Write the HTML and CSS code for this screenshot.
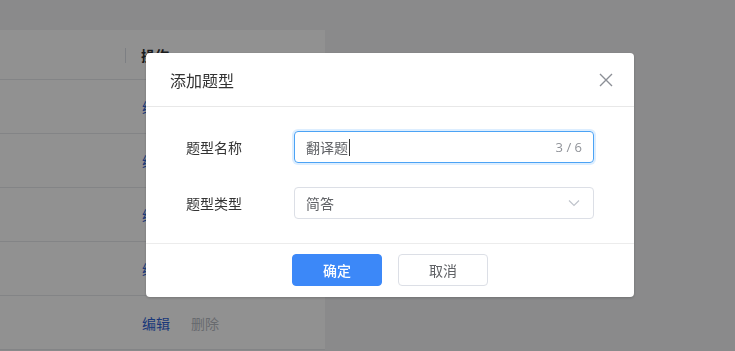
FILE: index.html
```html
<!DOCTYPE html>
<html lang="zh">
<head>
<meta charset="utf-8">
<title>添加题型</title>
<link rel="stylesheet" href="styles.css">
</head>
<body>
<div class="page">
  <div class="table">
    <div class="row head"><div class="cell-main"></div><div class="cell-act"><span class="divider"></span><span class="th">操作</span></div></div>
    <div class="row"><div class="cell-main"></div><div class="cell-act"><span class="link">编辑</span><span class="link off">删除</span></div></div>
    <div class="row"><div class="cell-main"></div><div class="cell-act"><span class="link">编辑</span><span class="link off">删除</span></div></div>
    <div class="row"><div class="cell-main"></div><div class="cell-act"><span class="link">编辑</span><span class="link off">删除</span></div></div>
    <div class="row"><div class="cell-main"></div><div class="cell-act"><span class="link">编辑</span><span class="link off">删除</span></div></div>
    <div class="row"><div class="cell-main"></div><div class="cell-act"><span class="link">编辑</span><span class="link off">删除</span></div></div>
  </div>
</div>
<div class="mask"></div>
<div class="dialog">
  <div class="dlg-head">
    <span class="dlg-title">添加题型</span>
    <svg class="close" width="14" height="14" viewBox="0 0 14 14"><path d="M1 1L13 13M13 1L1 13" stroke="#8c8f96" stroke-width="1.4" fill="none"/></svg>
  </div>
  <div class="dlg-body">
    <div class="form-row">
      <label class="lbl">题型名称</label>
      <div class="input focus"><span class="val">翻译题</span><span class="caret"></span><span class="count">3 / 6</span></div>
    </div>
    <div class="form-row">
      <label class="lbl">题型类型</label>
      <div class="input"><span class="val">简答</span><svg class="chev" width="12" height="8" viewBox="0 0 12 8"><path d="M1 1.5L6 6.5L11 1.5" stroke="#c0c4cc" stroke-width="1.2" fill="none"/></svg></div>
    </div>
  </div>
  <div class="dlg-foot">
    <button class="btn primary">确定</button>
    <button class="btn">取消</button>
  </div>
</div>
</body>
</html>
```
FILE: styles.css
```css
html, body { margin: 0; padding: 0; }
body {
  width: 735px; height: 351px; overflow: hidden;
  background: #f2f3f5;
  font-family: "Noto Sans CJK SC", "Noto Sans", sans-serif;
  font-size: 14px;
  color: #303133;
}
.page { padding-top: 30px; }
.table { width: 325px; background: #fff; }
.row {
  display: flex; height: 54px; box-sizing: border-box;
  border-bottom: 1px solid #e6e8eb;
}
.row.head { height: 50px; }
.cell-main { width: 125px; }
.cell-act { flex: 1; display: flex; align-items: center; gap: 21px; padding-left: 17px; position: relative; }
.head .cell-act { padding-left: 16px; }
.divider { position: absolute; left: 0; top: 18px; width: 1px; height: 15px; background: #dcdfe6; }
.th { font-weight: bold; color: #303133; }
.link { color: #2f63d6; }
.link.off { color: #b8bcc4; }
.mask {
  position: fixed; inset: 0;
  background: rgba(0,0,0,0.43);
}
.dialog {
  position: fixed; left: 146px; top: 53px; width: 488px;
  background: #fff; border-radius: 4px;
  box-shadow: 0 1px 3px rgba(0,0,0,0.2);
}
.dlg-head {
  height: 54px; box-sizing: border-box;
  display: flex; align-items: center; justify-content: space-between;
  padding: 0 21px 0 24px;
  border-bottom: 1px solid #e8e8e8;
}
.dlg-title { font-size: 16px; color: #333; }
.close { display: block; }
.dlg-body { padding: 24px 40px 24px 40px; display: flex; flex-direction: column; gap: 24px; border-bottom: 1px solid #ececec; }
.form-row { display: flex; align-items: center; }
.lbl { width: 108px; color: #333; }
.input {
  width: 300px; height: 32px; box-sizing: border-box;
  border: 1px solid #dcdfe6; border-radius: 4px;
  display: flex; align-items: center; padding: 0 11px;
  color: #606266;
}
.input.focus { border-color: #4ca3f5; box-shadow: 0 0 0 2px rgba(64,158,255,0.18); }
.caret { width: 1px; height: 17px; background: #333; margin-left: 1px; }
.count { margin-left: auto; color: #909399; font-family: "Open Sans", "Noto Sans", sans-serif; font-size: 13px; }
.chev { margin-left: auto; margin-right: 2px; }
.dlg-foot { display: flex; justify-content: center; gap: 16px; padding: 10px 0 11px; }
.btn {
  width: 90px; height: 32px; border-radius: 4px;
  border: 1px solid #dcdfe6; background: #fff; color: #606266;
  font-family: inherit; font-size: 14px; padding: 0;
}
.btn.primary { background: #3c88f8; border-color: #3c88f8; color: #fff; font-weight: 500; }
```
